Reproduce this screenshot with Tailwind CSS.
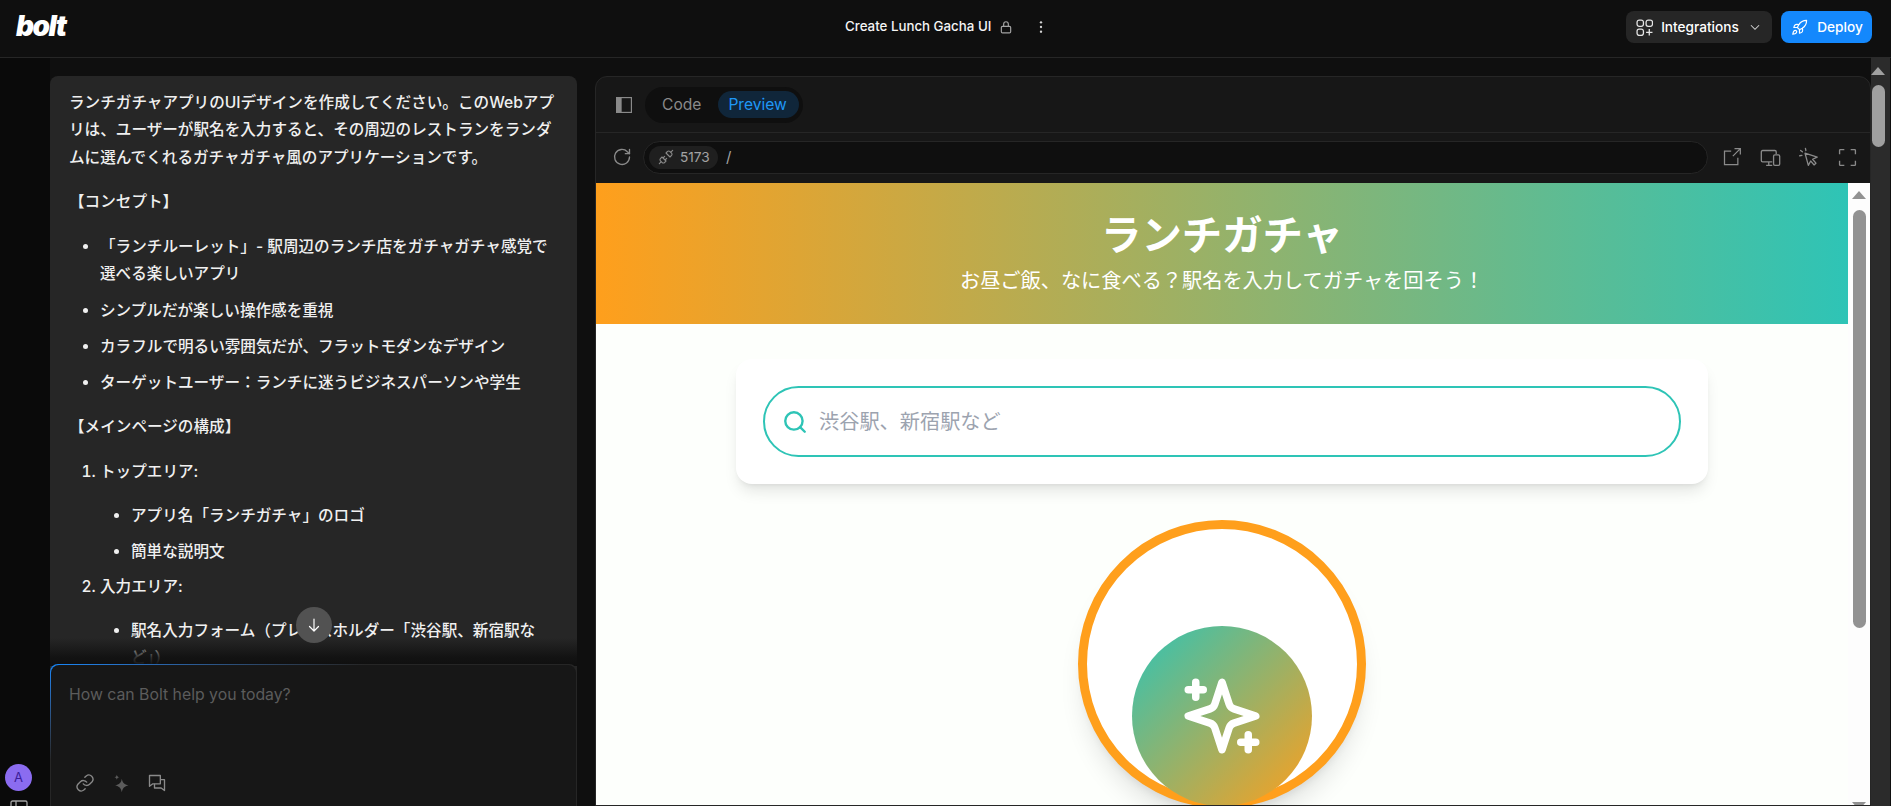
<!DOCTYPE html>
<html lang="ja">
<head>
  <meta charset="UTF-8" />
  <title>Create Lunch Gacha UI</title>
  <script src="https://cdn.jsdelivr.net/npm/@tailwindcss/browser@4"></script>
</head>
<body class="relative h-[806px] w-[1891px] overflow-hidden bg-[#0f0f0f] font-['Inter','Noto_Sans_CJK_JP',sans-serif] text-white">
  <!-- top bar -->
  <header class="relative flex h-[58px] items-start justify-between border-b border-[#262626] pl-[16px] pr-[19px] pt-[11px]">
    <span class="mt-[1px] text-[28px] font-black italic leading-[28px] tracking-[-1.5px]">bolt</span>
    <div class="absolute left-[845px] top-0 flex h-[54px] items-center text-[13.3px] font-medium text-[#f5f5f5]">
      <span>Create Lunch Gacha UI</span>
      <svg class="ml-[8px] h-[14px] w-[14px] text-[#a3a3a3]" viewBox="0 0 24 24" fill="none" stroke="currentColor" stroke-width="2"><rect x="4" y="11" width="16" height="11" rx="2"/><path d="M8 11V7a4 4 0 0 1 8 0v4"/></svg>
      <svg class="ml-[21px] h-[14px] w-[14px] text-[#d4d4d4]" viewBox="0 0 24 24" fill="currentColor"><circle cx="12" cy="4" r="2"/><circle cx="12" cy="12" r="2"/><circle cx="12" cy="20" r="2"/></svg>
    </div>
    <div class="flex items-center gap-[9px]">
      <button class="flex h-[32px] w-[146px] items-center justify-center gap-[9px] rounded-lg bg-[#262626] text-[13.65px] font-medium">
        <svg class="h-[17px] w-[17px]" viewBox="0 0 16 16" fill="none" stroke="#e5e5e5" stroke-width="1.2"><rect x="1" y="1" width="6" height="6" rx="2"/><rect x="9.5" y="1" width="6" height="6" rx="2"/><rect x="1" y="9.5" width="6" height="6" rx="2"/><path d="M12.5 9.5v6M9.5 12.5h6"/></svg>
        <span class="-ml-[1px]">Integrations</span>
        <svg class="h-[14px] w-[14px]" viewBox="0 0 24 24" fill="none" stroke="#d4d4d4" stroke-width="1.8"><path d="m5 9 7 7 7-7"/></svg>
      </button>
      <button class="flex h-[32px] w-[91px] items-center justify-center gap-[9px] rounded-lg bg-[#1488fc] pl-[1px] text-[13.65px] font-medium">
        <svg class="h-[17px] w-[17px]" viewBox="0 0 24 24" fill="none" stroke="white" stroke-width="1.7" stroke-linecap="round" stroke-linejoin="round"><path d="M4.5 16.5c-1.5 1.26-2 5-2 5s3.74-.5 5-2c.71-.84.7-2.13-.09-2.91a2.18 2.18 0 0 0-2.91-.09z"/><path d="m12 15-3-3a22 22 0 0 1 2-3.95A12.88 12.88 0 0 1 22 2c0 2.72-.78 7.5-6 11a22.35 22.35 0 0 1-4 2z"/><path d="M9 12H4s.55-3.03 2-4c1.62-1.08 5 0 5 0"/><path d="M12 15v5s3.03-.55 4-2c1.08-1.62 0-5 0-5"/></svg>
        Deploy
      </button>
    </div>
  </header>

  <div class="relative flex h-[748px]">
    <!-- left rail -->
    <aside class="relative w-[50px] shrink-0 bg-[#0a0a0a]">
      <div class="absolute left-[5px] top-[706px] flex h-[27px] w-[27px] items-center justify-center rounded-full bg-[#8b6cf0] text-[13px] text-[#3b1d9a]">A</div>
      <svg class="absolute left-[10px] top-[742px] h-[18px] w-[18px]" viewBox="0 0 18 18" fill="none" stroke="#a3a3a3" stroke-width="1.3"><rect x="1" y="1" width="16" height="14" rx="1.5"/><path d="M6 1v14"/></svg>
    </aside>

    <!-- chat column -->
    <section class="relative w-[527px] shrink-0 pt-[18px]">
      <div class="h-[640px] overflow-hidden rounded-t-lg bg-[#262626] pl-[19px] pr-[21px] pt-[13px] text-[15.6px] font-medium leading-[27.3px] text-[#f0f0f0]">
        <p>ランチガチャアプリのUIデザインを作成してください。このWebアプリは、ユーザーが駅名を入力すると、その周辺のレストランをランダムに選んでくれるガチャガチャ風のアプリケーションです。</p>
        <p class="mt-[17px]">【コンセプト】</p>
        <ul class="mt-[18px] list-disc space-y-[9px] pl-[31px]">
          <li>「ランチルーレット」- 駅周辺のランチ店をガチャガチャ感覚で選べる楽しいアプリ</li>
          <li>シンプルだが楽しい操作感を重視</li>
          <li>カラフルで明るい雰囲気だが、フラットモダンなデザイン</li>
          <li>ターゲットユーザー：ランチに迷うビジネスパーソンや学生</li>
        </ul>
        <p class="mt-[16px]">【メインページの構成】</p>
        <ol class="mt-[18px] list-decimal pl-[31px]">
          <li>トップエリア:
            <ul class="mt-[17px] list-disc space-y-[8px] pl-[31px]">
              <li>アプリ名「ランチガチャ」のロゴ</li>
              <li>簡単な説明文</li>
            </ul>
          </li>
          <li class="mt-[8px]">入力エリア:
            <ul class="mt-[17px] list-disc pl-[31px]">
              <li>駅名入力フォーム（プレースホルダー「渋谷駅、新宿駅など」）</li>
            </ul>
          </li>
        </ol>
      </div>
      <div class="absolute left-0 right-0 top-[580px] h-[28px] bg-linear-to-b from-transparent via-[#0f0f0f]/85 via-70% to-[#0f0f0f]"></div>
      <button class="absolute left-[246px] top-[549px] flex h-[36px] w-[36px] items-center justify-center rounded-full bg-[#525252]">
        <svg class="h-[18px] w-[18px]" viewBox="0 0 24 24" fill="none" stroke="white" stroke-width="1.6" stroke-linecap="round" stroke-linejoin="round"><path d="M12 4v16M6 14l6 6 6-6"/></svg>
      </button>
      <div class="absolute left-0 right-0 top-[606px] h-[160px] rounded-t-lg bg-linear-to-br from-[#1488fc] via-[#262626] via-30% to-[#262626] p-px">
        <div class="relative h-full rounded-t-lg bg-[#171717]">
          <p class="pl-[18px] pt-[16px] text-[15.8px] leading-[27px] text-[#5c5c5c]">How can Bolt help you today?</p>
          <div class="absolute left-[24px] top-[108px] flex items-center gap-[16px] text-[#8a8a8a]">
            <svg class="h-[20px] w-[20px]" viewBox="0 0 24 24" fill="none" stroke="currentColor" stroke-width="1.6" stroke-linecap="round"><path d="M10 13a5 5 0 0 0 7.5.5l3-3a5 5 0 0 0-7-7l-1.7 1.7"/><path d="M14 11a5 5 0 0 0-7.5-.5l-3 3a5 5 0 0 0 7 7l1.7-1.7"/></svg>
            <svg class="h-[20px] w-[20px]" viewBox="0 0 24 24" fill="#5c5c5c"><path d="M13 7c1 5 3 7 8 8-5 1-7 3-8 8-1-5-3-7-8-8 5-1 7-3 8-8z"/><path d="M7 2c.4 2 1.2 2.8 3 3-1.8.4-2.6 1-3 3-.4-2-1.2-2.6-3-3 1.8-.2 2.6-1 3-3z"/></svg>
            <svg class="h-[20px] w-[20px]" viewBox="0 0 24 24" fill="none" stroke="currentColor" stroke-width="1.6" stroke-linejoin="round"><path d="M3 3h13v10H7l-4 3z"/><path d="M16 8h5v13l-4-3H9v-5"/></svg>
          </div>
        </div>
      </div>
    </section>

    <!-- workbench -->
    <section class="relative ml-[18px] mt-[18px] h-[730px] w-[1276px] shrink-0 overflow-hidden rounded-t-xl border border-[#262626] bg-[#171717]">
      <div class="flex h-[56px] items-center border-b border-[#262626] pl-[20px]">
        <svg class="h-[16px] w-[16px]" viewBox="0 0 17 17"><rect x="0.5" y="0.5" width="16" height="16" fill="none" stroke="#8a8a8a" stroke-width="1.5"/><rect x="1" y="1" width="5" height="15" fill="#8a8a8a"/></svg>
        <div class="ml-[13px] flex h-[36px] items-center rounded-full bg-[#0f0f0f] pl-[17px] pr-[4px] text-[15.6px]">
          <span class="pr-[17px] text-[#8a8a8a]">Code</span>
          <span class="flex h-[27px] items-center rounded-full bg-[#10263a] pl-[10px] pr-[12px] text-[#1f97f5]">Preview</span>
        </div>
      </div>
      <div class="flex h-[50px] items-center pb-[2px] pl-[16px] pr-[13px]">
        <svg class="h-[20px] w-[20px]" viewBox="0 0 24 24" fill="none" stroke="#8a8a8a" stroke-width="1.6" stroke-linecap="round" stroke-linejoin="round"><path d="M21 12a9 9 0 1 1-2.6-6.4L21 8"/><path d="M21 3v5h-5"/></svg>
        <div class="ml-[11px] flex h-[33px] w-[1065px] items-center rounded-full border border-[#262626] bg-[#0f0f0f] pl-[5px] text-[13.65px] text-[#a3a3a3]">
          <span class="flex h-[23px] w-[69px] items-center gap-[6px] rounded-full bg-[#1f1f1f] pl-[9px]">
            <svg class="h-[16px] w-[16px]" viewBox="0 0 24 24" fill="none" stroke="#8a8a8a" stroke-width="1.7" stroke-linecap="round" stroke-linejoin="round"><path d="m19 5 3-3M2 22l3-3M6.3 20.3a2.4 2.4 0 0 0 3.4 0L12 18l-6-6-2.3 2.3a2.4 2.4 0 0 0 0 3.4ZM7.5 13.5 10 11M10.5 16.5 13 14M12 6l6 6 2.3-2.3a2.4 2.4 0 0 0 0-3.4l-2.6-2.6a2.4 2.4 0 0 0-3.4 0Z"/></svg>
            5173
          </span>
          <span class="ml-[8px] text-[15px]">/</span>
        </div>
        <div class="ml-auto flex items-center text-[#8a8a8a]">
          <svg class="h-[20px] w-[20px]" viewBox="0 0 24 24" fill="none" stroke="currentColor" stroke-width="1.5"><path d="M11 5H3v16h16v-8M13 11l9-9M15 2h7v7"/></svg>
          <svg class="ml-[18px] h-[21px] w-[21px]" viewBox="0 0 24 24" fill="none" stroke="currentColor" stroke-width="1.5"><path d="M14 17H3a1.5 1.5 0 0 1-1.5-1.5v-10A1.5 1.5 0 0 1 3 4h14a1.5 1.5 0 0 1 1.5 1.5V8M7 21h7M10 17v4"/><rect x="15.5" y="9" width="7" height="12" rx="1.5"/></svg>
          <svg class="ml-[17px] h-[21px] w-[21px]" viewBox="0 0 24 24" fill="none" stroke="currentColor" stroke-width="1.5" stroke-linejoin="round" stroke-linecap="round"><path d="M8 7l3.8 14 2.7-5 3.8 4.5 2.2-2-3.8-4.5 5.3-2.5z"/><path d="M8.5 1.5l.5 2.5M3 4l2 1.5M2 10l2.5-.5"/></svg>
          <svg class="ml-[19px] h-[19px] w-[19px]" viewBox="0 0 24 24" fill="none" stroke="currentColor" stroke-width="1.7"><path d="M8 2H3a1 1 0 0 0-1 1v5M16 2h5a1 1 0 0 1 1 1v5M22 16v5a1 1 0 0 1-1 1h-5M2 16v5a1 1 0 0 0 1 1h5"/></svg>
        </div>
      </div>

      <!-- preview -->
      <div class="flex h-[623px] bg-[#fdfffc]">
        <main class="w-[1252px] shrink-0">
          <div class="flex h-[141px] flex-col items-center bg-linear-to-r/srgb from-[#ff9f1c] to-[#2ec4b6] pt-[23px]">
            <h1 class="text-[40.4px] font-bold leading-[60px]">ランチガチャ</h1>
            <p class="text-[20.2px] leading-[30px]">お昼ご飯、なに食べる？駅名を入力してガチャを回そう！</p>
          </div>
          <div class="mx-auto mt-[35px] flex h-[125px] w-[972px] items-center rounded-2xl bg-white px-[27px] shadow-lg">
            <div class="flex h-[71px] w-full items-center rounded-full border-2 border-[#2ec4b6] pl-[17px]">
              <svg class="h-[26px] w-[26px]" viewBox="0 0 24 24" fill="none" stroke="#2ec4b6" stroke-width="2.2" stroke-linecap="round"><circle cx="11" cy="11" r="8"/><path d="m21 21-4.3-4.3"/></svg>
              <span class="ml-[11px] mt-px text-[20.2px] text-[#9ca3af]">渋谷駅、新宿駅など</span>
            </div>
          </div>
          <div class="relative mx-auto mt-[36px] h-[288px] w-[288px] rounded-full border-[9px] border-[#ff9f1c] bg-white shadow-xl">
            <div class="absolute left-[45px] top-[97px] flex h-[180px] w-[180px] items-center justify-center rounded-full bg-linear-to-br/srgb from-[#2ec4b6] to-[#ff9f1c]">
              <svg class="h-[90px] w-[90px]" viewBox="0 0 24 24" fill="none" stroke="white" stroke-width="2" stroke-linecap="round" stroke-linejoin="round"><path d="m12 3-1.912 5.813a2 2 0 0 1-1.275 1.275L3 12l5.813 1.912a2 2 0 0 1 1.275 1.275L12 21l1.912-5.813a2 2 0 0 1 1.275-1.275L21 12l-5.813-1.912a2 2 0 0 1-1.275-1.275L12 3Z"/><path d="M5 3v4M19 17v4M3 5h4M17 19h4"/></svg>
            </div>
          </div>
        </main>
        <!-- preview scrollbar -->
        <div class="relative w-[22px] shrink-0 bg-[#fdfdfd]">
          <div class="absolute left-[5px] top-[27px] h-[418px] w-[13px] rounded-full bg-[#929292]"></div>
          <div class="absolute left-[4px] top-[8px] h-0 w-0 border-x-[7px] border-b-[8px] border-x-transparent border-b-[#929292]"></div>
          <div class="absolute bottom-[-4px] left-[4px] h-0 w-0 border-x-[7px] border-t-[8px] border-x-transparent border-t-[#929292]"></div>
        </div>
      </div>
    </section>
  </div>

  <!-- page scrollbar -->
  <div class="absolute left-[1871px] top-[57px] h-[749px] w-[19px] bg-[#2b2b2b]">
    <div class="absolute left-[1px] top-[28px] h-[62px] w-[13px] rounded-full bg-[#a0a0a0]"></div>
    <div class="absolute left-0 top-[10px] h-0 w-0 border-x-[7px] border-b-[8px] border-x-transparent border-b-[#a0a0a0]"></div>
  </div>
</body>
</html>
